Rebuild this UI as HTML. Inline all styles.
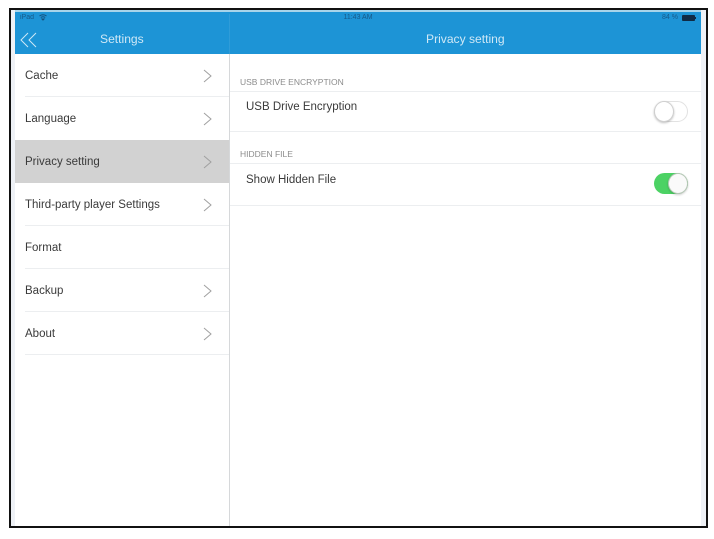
<!DOCTYPE html>
<html>
<head>
<meta charset="utf-8">
<style>
html,body{margin:0;padding:0;background:#fff;}
body{width:714px;height:539px;position:relative;overflow:hidden;font-family:"Liberation Sans",sans-serif;color:#333;}
div{position:absolute;box-sizing:border-box;}
.t{white-space:nowrap;line-height:14px;font-size:11.5px;color:#3a3a3a;filter:blur(.35px);}
.l{height:1px;background:#eceef0;}
.h{white-space:nowrap;line-height:10px;font-size:8.5px;color:#8c8c8c;filter:blur(.35px);}
.s{white-space:nowrap;font-size:7px;line-height:8px;color:#175a8a;filter:blur(.3px);}
svg{position:absolute;left:0;top:0;}
</style>
</head>
<body>
<div style="left:9px;top:8px;width:699px;height:520px;border:2px solid #111;background:#fff;"></div>
<div style="left:11px;top:10px;width:4px;height:516px;background:#eef1f6;"></div>
<div style="left:701px;top:10px;width:5px;height:516px;background:#eef1f6;"></div>
<div style="left:15px;top:10px;width:686px;height:2px;background:#a8d4ea;"></div>
<div style="left:15px;top:12px;width:686px;height:42px;background:#1d94d6;"></div>
<div style="left:229px;top:14px;width:1px;height:40px;background:#2f9cd8;"></div>
<div style="left:229px;top:54px;width:1px;height:472px;background:#d6d8da;"></div>

<div class="s" style="left:20px;top:14px;">iPad</div>
<div class="s" style="left:340px;top:14px;width:36px;text-align:center;">11:43 AM</div>
<div class="s" style="left:662px;top:14px;">84 %</div>
<div style="left:682px;top:15px;width:13px;height:6px;background:#102a44;border-radius:1px;"></div>
<div style="left:695px;top:17px;width:1px;height:2px;background:#102a44;"></div>

<svg width="714" height="539" fill="none">
<path d="M39.5 16 Q43 13.500 46.500 16 M40.800 17.500 Q43 16 45.200 17.500 M42 19 L43 20 L44 19 Z" stroke="#164f7a" stroke-width="1"/>
<path d="M28 33 L21 40 L28 47 M36 33 L29 40 L36 47" stroke="#cfe8f6" stroke-width="1"/>
<g stroke="#a0a0a0" stroke-width="1">
<path d="M204 70 L211 76 L204 82"/>
<path d="M204 113 L211 119 L204 125"/>
<path d="M204 285 L211 291 L204 297"/>
<path d="M204 328 L211 334 L204 340"/>
</g>
</svg>
<div style="left:100px;top:32px;font-size:12.100px;line-height:15px;color:#cfe8f6;white-space:nowrap;filter:blur(.3px);">Settings</div>
<div style="left:426px;top:32px;font-size:12.100px;line-height:15px;color:#cfe8f6;white-space:nowrap;filter:blur(.3px);">Privacy setting</div>

<div style="left:15px;top:140px;width:214px;height:43px;background:#d2d2d2;"></div>
<svg width="714" height="539" fill="none">
<g stroke="#a0a0a0" stroke-width="1">
<path d="M204 156 L211 162 L204 168"/>
<path d="M204 199 L211 205 L204 211"/>
</g>
</svg>

<div class="t" style="left:25px;top:69px;">Cache</div>
<div class="t" style="left:25px;top:112px;">Language</div>
<div class="t" style="left:25px;top:155px;">Privacy setting</div>
<div class="t" style="left:25px;top:198px;">Third-party player Settings</div>
<div class="t" style="left:25px;top:241px;">Format</div>
<div class="t" style="left:25px;top:284px;">Backup</div>
<div class="t" style="left:25px;top:327px;">About</div>

<div class="l" style="left:25px;top:96px;width:204px;"></div>
<div class="l" style="left:25px;top:225px;width:204px;"></div>
<div class="l" style="left:25px;top:268px;width:204px;"></div>
<div class="l" style="left:25px;top:311px;width:204px;"></div>
<div class="l" style="left:25px;top:354px;width:204px;"></div>

<div class="h" style="left:240px;top:77px;">USB DRIVE ENCRYPTION</div>
<div class="l" style="left:230px;top:91px;width:471px;"></div>
<div class="t" style="left:246px;top:100px;">USB Drive Encryption</div>
<div class="l" style="left:230px;top:131px;width:471px;"></div>

<div class="h" style="left:240px;top:149px;">HIDDEN FILE</div>
<div class="l" style="left:230px;top:163px;width:471px;"></div>
<div class="t" style="left:246px;top:173px;">Show Hidden File</div>
<div class="l" style="left:230px;top:205px;width:471px;"></div>

<div style="left:654px;top:101px;width:34px;height:21px;border-radius:11px;background:#fff;border:1px solid #e2e2e2;"></div>
<div style="left:654px;top:101px;width:20px;height:21px;border-radius:50%;background:#fff;border:1px solid #d0d0d0;box-shadow:0 1px 2px rgba(0,0,0,.25);"></div>
<div style="left:654px;top:173px;width:34px;height:21px;border-radius:11px;background:#4cd264;"></div>
<div style="left:668px;top:173px;width:20px;height:21px;border-radius:50%;background:#fafafa;border:1px solid #b8c8b8;box-shadow:0 1px 2px rgba(0,0,0,.2);"></div>
</body>
</html>
